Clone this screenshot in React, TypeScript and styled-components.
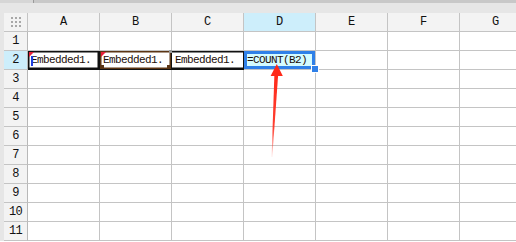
import React from "react";
import styled, { createGlobalStyle } from "styled-components";

const GlobalStyle = createGlobalStyle`
  html, body { margin: 0; padding: 0; background: #ffffff; overflow: hidden; }
  body { font-family: "Liberation Mono", "DejaVu Sans Mono", monospace; }
`;

const columns = ["A", "B", "C", "D", "E", "F", "G"];
const rows = [1, 2, 3, 4, 5, 6, 7, 8, 9, 10, 11];

const Page = styled.div`
  position: relative;
  width: 516px;
  height: 242px;
  overflow: hidden;
`;

const TopBar = styled.div`
  height: 13px;
  display: flex;
  flex-direction: column;
`;

const TopEdge = styled.div`
  height: 3px;
  display: flex;
  background: #c8c8c8;
`;

const TopEdgeLeft = styled.div`
  width: 33px;
  background: #d6d6d6;
  border-right: 1px solid #9a9a9a;
`;

const TopFill = styled.div`
  flex: 1;
  background: #e6e6e6;
`;

const Body = styled.div`
  display: flex;
`;

const LeftStrip = styled.div`
  width: 4px;
  background: #e6e6e6;
  flex-shrink: 0;
`;

const Sheet = styled.div`
  display: flex;
  flex-direction: column;
`;

const Row = styled.div`
  display: flex;
  height: 19px;
`;

const Corner = styled.div`
  width: 24px;
  height: 19px;
  box-sizing: border-box;
  background: #f3f3f3;
  border-right: 1px solid #c4c4c4;
  border-bottom: 1px solid #c4c4c4;
  display: flex;
  align-items: center;
  justify-content: center;
`;

const ColHeader = styled.div<{ $active?: boolean }>`
  width: 72px;
  flex-shrink: 0;
  height: 19px;
  box-sizing: border-box;
  background: ${(p) => (p.$active ? "#cdeefb" : "#f3f3f3")};
  border-right: 1px solid #c4c4c4;
  border-bottom: 1px solid #c4c4c4;
  display: flex;
  align-items: center;
  justify-content: center;
  font-size: 12px;
  color: #111;
`;

const RowHeader = styled.div<{ $active?: boolean }>`
  width: 24px;
  flex-shrink: 0;
  height: 19px;
  box-sizing: border-box;
  background: ${(p) => (p.$active ? "#cdeefb" : "#f3f3f3")};
  border-right: 1px solid #b8b8b8;
  border-bottom: 1px solid #c4c4c4;
  display: flex;
  align-items: center;
  justify-content: center;
  font-size: 12px;
  letter-spacing: -0.8px;
  color: #111;
`;

type CellKind = "plain" | "black" | "brown" | "open" | "selected";

const Cell = styled.div<{ $kind: CellKind }>`
  position: relative;
  width: 72px;
  flex-shrink: 0;
  height: 19px;
  box-sizing: border-box;
  border-right: 1px solid #c4c4c4;
  border-bottom: 1px solid #c4c4c4;
  background: ${(p) => (p.$kind === "selected" ? "#d4fbff" : "#ffffff")};
  font-size: 11px;
  letter-spacing: -0.6px;
  line-height: 18px;
  padding-left: 3px;
  color: #1c0d08;
  white-space: nowrap;
  overflow: visible;

  ${(p) =>
    p.$kind === "black" &&
    `box-shadow: inset 0 0 0 1.5px #111; border-color: #111;`}
  ${(p) =>
    p.$kind === "brown" &&
    `box-shadow: inset 0 0 0 1.5px #5b3514; border-color: #111;`}
  ${(p) =>
    p.$kind === "open" &&
    `box-shadow: inset 0 1.5px 0 #111, inset 0 -1.5px 0 #111; border-right: 1.5px solid #111; border-bottom-color: #111;`}
  ${(p) =>
    p.$kind === "selected" &&
    `box-shadow: inset 0 0 0 3px #2f80e8; padding-left: 3px;`}
`;

const CommentMark = styled.span`
  position: absolute;
  left: 1px;
  top: 1px;
  width: 0;
  height: 0;
  border-top: 5px solid #e8203a;
  border-right: 5px solid transparent;
`;

const CaretMark = styled.span`
  position: absolute;
  left: 3px;
  top: 5px;
  width: 2px;
  height: 10px;
  background: #1e3ee0;
`;

const BrownCorner = styled.span<{ $pos: "bl" | "br" | "tr" }>`
  position: absolute;
  width: 4px;
  height: 4px;
  background: #5b3514;
  ${(p) => (p.$pos === "bl" ? "left: 0; bottom: 0;" : "")}
  ${(p) => (p.$pos === "br" ? "right: 0; bottom: 0;" : "")}
  ${(p) => (p.$pos === "tr" ? "right: -1px; top: -1px; background: #9a9a9a; width: 3px; height: 3px;" : "")}
`;

const FillHandle = styled.span`
  position: absolute;
  right: -4px;
  bottom: -4px;
  width: 6px;
  height: 6px;
  background: #2f80e8;
  border: 1px solid #ffffff;
  z-index: 2;
`;

const Arrow = styled.svg`
  position: absolute;
  left: 0;
  top: 0;
  pointer-events: none;
  z-index: 3;
`;

function DotsIcon() {
  return (
    <svg width="10" height="10" viewBox="0 0 10 10">
      {[0, 1, 2].map((r) =>
        [0, 1, 2].map((c) => (
          <rect key={`${r}-${c}`} x={c * 4} y={r * 4} width="2" height="2" fill="#a8a8a8" />
        ))
      )}
    </svg>
  );
}

function cellFor(row: number, col: number) {
  if (row !== 2) return <Cell key={col} $kind="plain" />;
  if (col === 0)
    return (
      <Cell key={col} $kind="black">
        <CommentMark />
        <CaretMark />
        Embedded1.
      </Cell>
    );
  if (col === 1)
    return (
      <Cell key={col} $kind="brown">
        <CommentMark />
        <BrownCorner $pos="bl" />
        <BrownCorner $pos="br" />
        <BrownCorner $pos="tr" />
        Embedded1.
      </Cell>
    );
  if (col === 2)
    return (
      <Cell key={col} $kind="open">
        Embedded1.
      </Cell>
    );
  if (col === 3)
    return (
      <Cell key={col} $kind="selected">
        =COUNT(B2)
        <FillHandle />
      </Cell>
    );
  return <Cell key={col} $kind="plain" />;
}

export default function App() {
  return (
    <Page>
      <GlobalStyle />
      <TopBar>
        <TopEdge>
          <TopEdgeLeft />
        </TopEdge>
        <TopFill />
      </TopBar>
      <Body>
        <LeftStrip />
        <Sheet>
          <Row>
            <Corner>
              <DotsIcon />
            </Corner>
            {columns.map((c) => (
              <ColHeader key={c} $active={c === "D"}>
                {c}
              </ColHeader>
            ))}
          </Row>
          {rows.map((r) => (
            <Row key={r}>
              <RowHeader $active={r === 2}>{r}</RowHeader>
              {columns.map((_, i) => cellFor(r, i))}
            </Row>
          ))}
        </Sheet>
      </Body>
      <Arrow width="516" height="242" viewBox="0 0 516 242">
        <defs>
          <linearGradient id="shaft" x1="0" y1="1" x2="0" y2="0">
            <stop offset="0" stopColor="#ff2a1a" stopOpacity="0.1" />
            <stop offset="0.35" stopColor="#ff2a1a" stopOpacity="0.9" />
            <stop offset="1" stopColor="#ff2a1a" stopOpacity="1" />
          </linearGradient>
        </defs>
        <polygon points="272.3,157 271.6,157 274.4,74 278.2,74" fill="url(#shaft)" />
        <polygon points="276.8,64 282.8,76 270.6,76" fill="#ff2a1a" />
      </Arrow>
    </Page>
  );
}
